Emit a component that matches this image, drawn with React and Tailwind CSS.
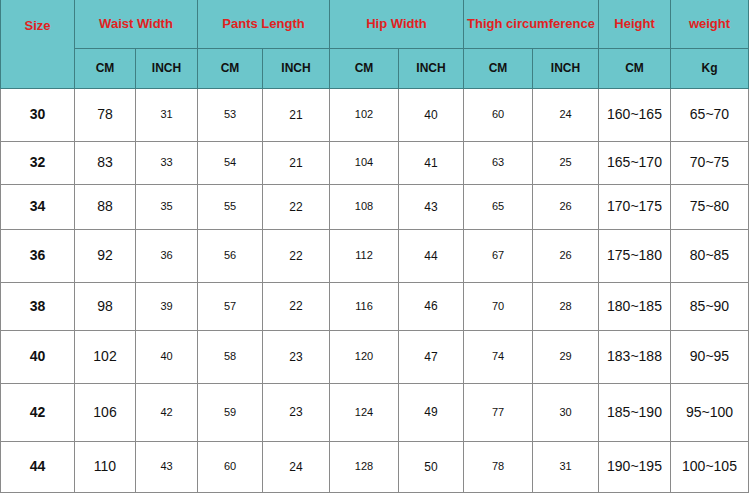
const cols = [74, 61, 62, 65, 67, 69, 65, 69, 66, 72, 78];
const rowHeights = [53, 43, 45, 53, 48, 53, 58, 51];

const rows = [
  ['30', '78', '31', '53', '21', '102', '40', '60', '24', '160~165', '65~70'],
  ['32', '83', '33', '54', '21', '104', '41', '63', '25', '165~170', '70~75'],
  ['34', '88', '35', '55', '22', '108', '43', '65', '26', '170~175', '75~80'],
  ['36', '92', '36', '56', '22', '112', '44', '67', '26', '175~180', '80~85'],
  ['38', '98', '39', '57', '22', '116', '46', '70', '28', '180~185', '85~90'],
  ['40', '102', '40', '58', '23', '120', '47', '74', '29', '183~188', '90~95'],
  ['42', '106', '42', '59', '23', '124', '49', '77', '30', '185~190', '95~100'],
  ['44', '110', '43', '60', '24', '128', '50', '78', '31', '190~195', '100~105'],
];

// text size per column in the body
const cellText = [
  'text-[14px] font-bold',
  'text-[14px]',
  'text-[11px]',
  'text-[11px]',
  'text-[12px]',
  'text-[11px]',
  'text-[12px]',
  'text-[11px]',
  'text-[11px]',
  'text-[14px]',
  'text-[14px]',
];

const head = 'border border-[#3f7f83] text-center align-middle';
const body = 'border border-[#8a8a8a] text-center align-middle text-[#111]';

export default function App() {
  return (
    <div className="w-[750px] h-[495px] bg-white overflow-hidden font-['Liberation_Sans',Arial,sans-serif]">
      <table className="table-fixed border-collapse w-[748px] border-l border-l-[#b9c6de]">
        <colgroup>
          {cols.map((w, i) => (
            <col key={i} style={{ width: w }} />
          ))}
        </colgroup>
        <thead className="bg-[#6cc6cb]">
          <tr className="h-[48px] text-[#e1221f] text-[13px] font-bold">
            <th rowSpan={2} className={`${head} border-t-0 align-top pt-[16px]`}>Size</th>
            <th colSpan={2} className={`${head} border-t-0`}>Waist Width</th>
            <th colSpan={2} className={`${head} border-t-0`}>Pants Length</th>
            <th colSpan={2} className={`${head} border-t-0`}>Hip Width</th>
            <th colSpan={2} className={`${head} border-t-0 whitespace-nowrap`}>Thigh circumference</th>
            <th className={`${head} border-t-0`}>Height</th>
            <th className={`${head} border-t-0`}>weight</th>
          </tr>
          <tr className="h-[40px] text-[#111] text-[12px] font-bold">
            <th className={head}>CM</th>
            <th className={head}>INCH</th>
            <th className={head}>CM</th>
            <th className={head}>INCH</th>
            <th className={head}>CM</th>
            <th className={head}>INCH</th>
            <th className={head}>CM</th>
            <th className={head}>INCH</th>
            <th className={head}>CM</th>
            <th className={head}>Kg</th>
          </tr>
        </thead>
        <tbody>
          {rows.map((r, i) => (
            <tr key={r[0]} style={{ height: rowHeights[i] }}>
              {r.map((v, j) => (
                <td key={j} className={`${body} ${cellText[j]}`}>
                  {v}
                </td>
              ))}
            </tr>
          ))}
        </tbody>
      </table>
    </div>
  );
}
